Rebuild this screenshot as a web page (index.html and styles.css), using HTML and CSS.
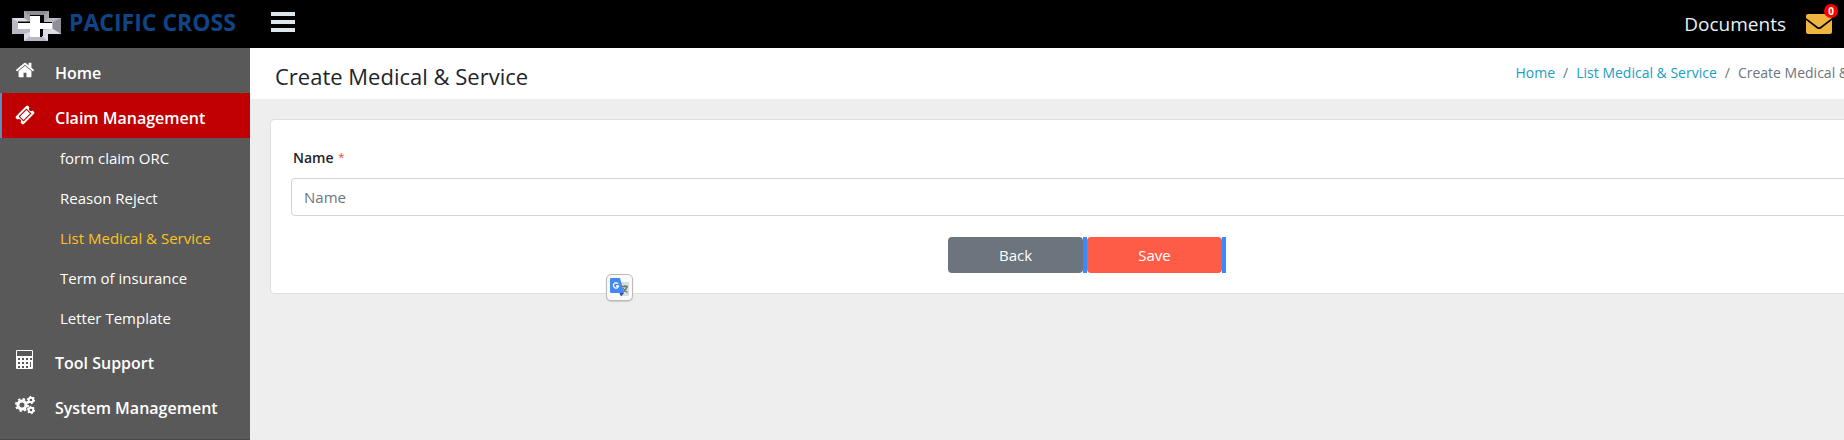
FILE: index.html
```html
<!DOCTYPE html>
<html lang="en">
<head>
<meta charset="utf-8">
<title>Create Medical &amp; Service</title>
<link rel="stylesheet" href="styles.css">
</head>
<body>
<header class="topbar">
  <a class="brand" href="#">
    <svg class="brand-logo" viewBox="0 0 49 30" aria-hidden="true">
      <path fill="#b9b8c4" d="M12 0H37V7H49V23H36V30H12V23H0V7H12Z"/>
      <path fill="#8f8d96" d="M12 0H37L33 5H16ZM49 7V23L41 18V11Z"/>
      <path fill="#dcdce8" d="M0 7H12L18 11H6ZM12 30V23L18 21V25ZM36 30V23H49L41 18L30 19V25Z"/>
      <path fill="#a5a3ac" d="M12 0L18 5V11L12 7ZM37 0L30 5V11L37 7Z"/>
      <path fill="#000" d="M18 4H32V11H40V18H31V25H28V12H6V10.500H18Z"/>
      <path fill="#fff" d="M18 5H28V12H40V18H28V26H18V18H6V12H18Z"/>
      <path fill="#000" d="M28 20H30V26H28Z"/>
    </svg>
    <span class="brand-name">PACIFIC CROSS</span>
  </a>
  <button class="menu-toggle" type="button" aria-label="Toggle menu"><span></span><span></span><span></span></button>
  <nav class="top-links">
    <a href="#">Documents</a>
    <a class="mail" href="#" aria-label="Messages">
      <svg viewBox="0 0 26 20" aria-hidden="true">
        <path fill="#f0b53e" d="M2 0H24A2 2 0 0 1 26 2V4L14 13Q13 13.700 12 13L0 4V2A2 2 0 0 1 2 0ZM0 6L11 14.500Q13 15.700 15 14.500L26 6V18A2 2 0 0 1 24 20H2A2 2 0 0 1 0 18Z"/>
      </svg>
      <span class="badge">0</span>
    </a>
  </nav>
</header>
<div class="layout">
  <aside class="sidebar">
    <a class="item" href="#">
      <svg viewBox="0 0 1792 1792" aria-hidden="true"><path d="M1472 992v480q0 26-19 45t-45 19h-384v-384h-256v384h-384q-26 0-45-19t-19-45v-480q0-1 .5-3t.5-3l575-474 575 474q1 2 1 6zm223-69l-62 74q-8 9-21 11h-3q-13 0-21-7l-692-577-692 577q-12 8-24 7-13-2-21-11l-62-74q-8-10-7-23.500t11-21.500l719-599q32-26 76-26t76 26l244 204v-195q0-14 9-23t23-9h192q14 0 23 9t9 23v408l219 182q10 8 11 21.500t-7 23.500z"/></svg>
      <span>Home</span>
    </a>
    <a class="item active" href="#">
      <svg viewBox="0 0 1792 1792" aria-hidden="true"><path d="M1024 452l316 316-572 572-316-316zm-211 979l618-618q19-19 19-45t-19-45l-362-362q-18-18-45-18t-45 18l-618 618q-19 19-19 45t19 45l362 362q18 18 45 18t45-18zm889-637l-907 908q-37 37-90.500 37t-90.500-37l-126-126q56-56 56-136t-56-136-136-56-136 56l-125-126q-37-37-37-90.500t37-90.500l907-906q37-37 90.500-37t90.500 37l125 125q-56 56-56 136t56 136 136 56 136-56l126 125q37 37 37 90.500t-37 90.500z"/></svg>
      <span>Claim Management</span>
    </a>
    <nav class="submenu">
      <a href="#">form claim ORC</a>
      <a href="#">Reason Reject</a>
      <a class="current" href="#">List Medical &amp; Service</a>
      <a href="#">Term of insurance</a>
      <a href="#">Letter Template</a>
    </nav>
    <a class="item" href="#">
      <svg viewBox="0 0 20 20" aria-hidden="true"><path fill-rule="evenodd" d="M2 0H17A1 1 0 0 1 18 1V18A1 1 0 0 1 17 19H2A1 1 0 0 1 1 18V1A1 1 0 0 1 2 0ZM2 1V6H17V1ZM3 8V10H5V8ZM7 8V10H9V8ZM11 8V10H13V8ZM15 8V10H17V8ZM3 12V14H5V12ZM7 12V14H9V12ZM11 12V14H13V12ZM15 12V17H16V12ZM3 16V18H5V16ZM7 16V18H9V16ZM11 16V18H13V16Z"/></svg>
      <span>Tool Support</span>
    </a>
    <a class="item" href="#">
      <svg viewBox="0 0 20 20" aria-hidden="true">
        <g fill="none" stroke="#fff">
          <circle cx="7" cy="10" r="4" stroke-width="3"/>
          <circle cx="7" cy="10" r="6" stroke-width="2" stroke-dasharray="2.360 2.352"/>
          <circle cx="16" cy="5" r="2.300" stroke-width="2"/>
          <circle cx="16" cy="5" r="3.600" stroke-width="1.200" stroke-dasharray="1.600 2.170"/>
          <circle cx="16" cy="15" r="2.300" stroke-width="2"/>
          <circle cx="16" cy="15" r="3.600" stroke-width="1.200" stroke-dasharray="1.600 2.170"/>
        </g>
      </svg>
      <span>System Management</span>
    </a>
  </aside>
  <main class="content">
    <div class="page-head">
      <h1>Create Medical &amp; Service</h1>
      <ol class="breadcrumb">
        <li><a href="#">Home</a></li>
        <li><a href="#">List Medical &amp; Service</a></li>
        <li>Create Medical &amp; Service</li>
      </ol>
    </div>
    <form class="card">
      <label for="name">Name <span class="required">*</span></label>
      <input id="name" type="text" placeholder="Name">
      <div class="actions">
        <div class="slot"><button class="back" type="button">Back</button></div>
        <div class="slot"><button class="save" type="submit">Save</button></div>
      </div>
    </form>
  </main>
</div>
<button class="translate" type="button" aria-label="Translate">
  <svg viewBox="0 0 20 20" aria-hidden="true">
    <path fill="#dcdcdc" d="M8 4H18A1 1 0 0 1 19 5V17A1 1 0 0 1 18 18H11Z"/>
    <path fill="none" stroke="#607d7d" stroke-width="1.300" d="M12 8.500H18M15 7V8.500M17 8.500Q16 12.500 12.500 14M13 10Q14.500 13 17.500 14.500"/>
    <path fill="#3549ad" d="M9.500 15H14L11 18.500Z"/>
    <path fill="#4688f4" d="M1 0H10L14 15H1A1 1 0 0 1 0 14V1A1 1 0 0 1 1 0Z"/>
    <path fill="none" stroke="#fff" stroke-width="1.300" d="M8 5.800A2.600 2.600 0 1 0 8.600 8H6"/>
  </svg>
</button>
</body>
</html>
```
FILE: styles.css
```css
* { box-sizing: border-box; }
body {
  margin: 0;
  min-height: 100vh;
  display: flex;
  flex-direction: column;
  overflow: hidden;
  background: #eee;
  color: #212529;
  font-family: "Segoe UI", "Open Sans", "Noto Sans", sans-serif;
  font-size: 15px;
}
a { color: inherit; text-decoration: none; }
button { border: 0; padding: 0; font: inherit; cursor: pointer; }

.topbar {
  display: flex;
  align-items: center;
  height: 48px;
  padding: 0 12px;
  background: #000;
}
.brand { display: flex; align-items: center; gap: 8px; width: 259px; }
.brand-logo { width: 49px; height: 30px; margin-top: 4px; }
.brand-name { color: #0f4587; font-size: 23px; font-weight: 700; line-height: 28px; padding-bottom: 4px; }
.menu-toggle { display: flex; flex-direction: column; gap: 4px; width: 24px; margin-bottom: 4px; background: none; }
.menu-toggle span { height: 4px; background: #dde8ec; }
.top-links { display: flex; align-items: center; gap: 20px; margin-left: auto; color: #e8f1f8; font-size: 19px; }
.mail { position: relative; height: 20px; }
.mail svg { display: block; width: 26px; height: 20px; }
.badge {
  position: absolute;
  top: -10px;
  right: -6px;
  width: 14px;
  height: 14px;
  border-radius: 50%;
  background: #f00;
  color: #fff;
  font-size: 10px;
  font-weight: 700;
  line-height: 14px;
  text-align: center;
}

.layout { display: flex; flex: 1; }
.sidebar { flex: none; width: 250px; background: #595959; border-bottom: 1px solid #4d494b; color: #fff; }
.item {
  display: flex;
  align-items: center;
  gap: 20px;
  height: 45px;
  padding: 4px 0 0 13px;
  border-left: 2px solid transparent;
  font-size: 16px;
  font-weight: 600;
}
.item svg { width: 20px; height: 20px; margin-bottom: 6px; fill: currentColor; }
.active { background: #c00000; border-color: #5b8fbf; }
.submenu a { display: block; padding-left: 60px; line-height: 40px; }
.submenu .current { color: #ffc222; }

.content { flex: 1; margin-right: -80px; }
.page-head {
  display: flex;
  align-items: center;
  justify-content: space-between;
  height: 51px;
  padding: 0 25px;
  background: #fff;
}
h1 { margin: 0; padding-top: 4px; font-size: 22px; font-weight: 500; }
.breadcrumb { display: flex; margin: 0; padding: 0 0 2px; list-style: none; color: #6c757d; font-size: 14px; white-space: nowrap; }
.breadcrumb a { color: #209dc5; }
.breadcrumb li + li::before { content: "/"; padding: 0 8px; }

.card {
  display: flex;
  flex-direction: column;
  margin: 20px;
  padding: 27px 20px 20px;
  border: 1px solid #dfdfdf;
  border-radius: 4px;
  background: #fff;
}
label { padding-left: 2px; font-size: 14px; font-weight: 600; line-height: 20px; }
.required { margin-left: 1px; color: #ff3b30; font-size: 11px; font-weight: 400; vertical-align: 2px; }
.card input {
  height: 38px;
  margin-top: 10px;
  padding: 0 12px;
  border: 1px solid #ced4da;
  border-radius: 4px;
  font: inherit;
  font-size: 15px;
}
.card input::placeholder { color: #6c757d; opacity: 1; }
.actions { display: flex; justify-content: center; margin-top: 21px; }
.slot { border-right: 4px solid #388bfd; }
.slot button { display: block; width: 135px; height: 36px; border-radius: 4px; color: #fff; }
.back { background: #6c757d; }
.save { background: #ff5c48; }

.translate {
  position: absolute;
  left: 606px;
  top: 274px;
  display: grid;
  place-items: center;
  width: 27px;
  height: 27px;
  border: 1px solid #bbb;
  border-radius: 5px;
  background: #fafafa;
  box-shadow: 0 1px 1px #ccc;
}
.translate svg { width: 20px; height: 20px; }
```
